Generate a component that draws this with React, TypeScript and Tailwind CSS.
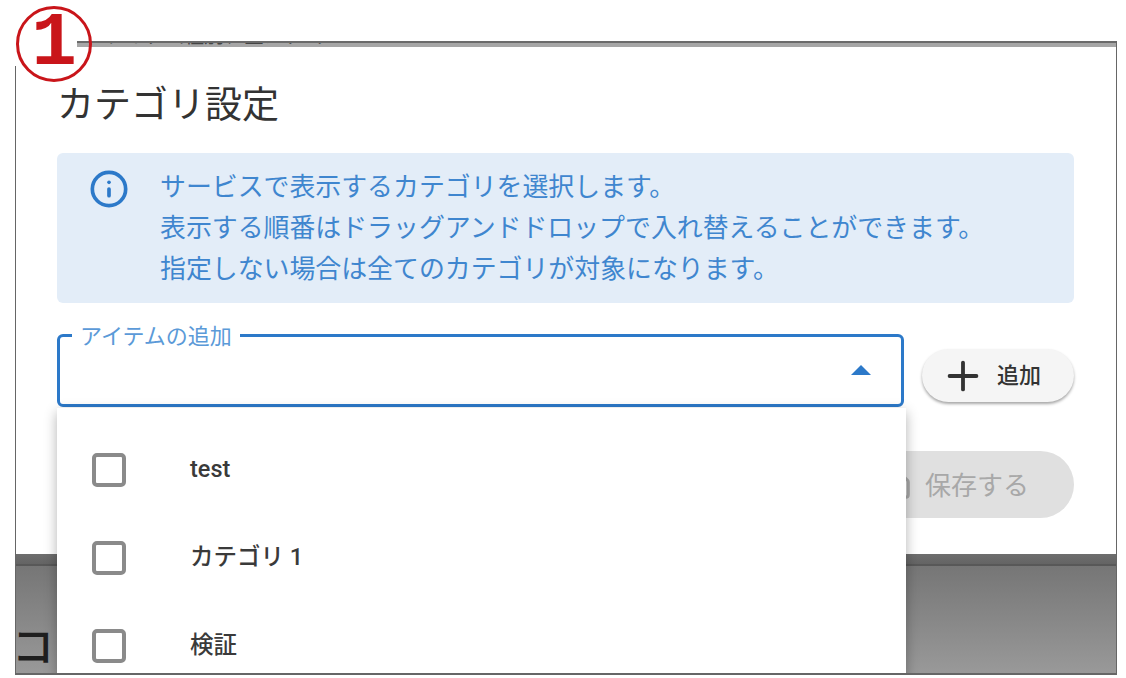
import { Info, Plus, Save } from "lucide-react";

const items = ["test", "カテゴリ 1", "検証"];
const font = "font-['Roboto','Noto_Sans_CJK_JP',sans-serif]";

function Row({ label }: { label: string }) {
  return (
    <div className="flex h-[88px] shrink-0 items-center pl-[35px]">
      <div className="h-[34px] w-[34px] rounded-[5px] border-[4px] border-[#8a8a8a]" />
      <span className="ml-[64px] text-[23.5px] font-medium text-[#3a3a3a]">{label}</span>
    </div>
  );
}

export default function App() {
  return (
    <div className={`relative h-[678px] w-[1126px] overflow-hidden bg-white ${font}`}>
      {/* screenshot frame */}
      <div className="ml-[15px] flex h-[675px] w-[1102px] flex-col pt-[41px]">
        <div className="relative flex h-[634px] flex-col overflow-hidden border-x border-b-2 border-[#666666]">
          {/* sliver of the page above the dialog */}
          <div className="h-[6px] shrink-0 overflow-hidden border-t-2 border-[#6a6a6a] bg-[#a6a6a6] pl-[90px] text-[20px] leading-[6px] whitespace-nowrap text-[#444444]">
            <span className="relative -top-[10px]">アイテム種別、全カテゴリ</span>
          </div>
          <div className="h-[507px] shrink-0 bg-white pl-[41px] pr-[42px]">
            <h1 className="pt-[35px] text-[37px] leading-[48px] font-normal text-[#333333]">カテゴリ設定</h1>
            <div className="mt-[23px] flex h-[150px] gap-[31px] rounded-[6px] bg-[#e3edf8] pl-[32px] pt-[14px] text-[25.9px] leading-[41px] whitespace-nowrap text-[#3f86cf]">
              <Info className="mt-[2px] h-[40px] w-[40px] shrink-0 text-[#2c79c9]" strokeWidth={2.2} />
              <p>
                サービスで表示するカテゴリを選択します。<br />
                表示する順番はドラッグアンドドロップで入れ替えることができます。<br />
                指定しない場合は全てのカテゴリが対象になります。
              </p>
            </div>
            <div className="mt-[31px] flex items-center gap-[18px]">
              <div className="relative flex h-[73px] w-[847px] items-center justify-end rounded-[6px] border-[3px] border-[#2c79c9] pb-[2px] pr-[30px]">
                <span className="absolute -top-[12px] left-[12px] bg-white px-[8px] text-[22px] leading-[24px] text-[#5b9ad8]">アイテムの追加</span>
                <span className="h-0 w-0 border-x-[10px] border-b-[10px] border-x-transparent border-b-[#2c79c9]" />
              </div>
              <button className="mt-[10px] flex h-[53px] w-[152px] items-center gap-[11px] rounded-full bg-[#f5f5f5] pl-[18px] text-[22px] font-medium text-[#333333] shadow-[0_2px_3px_rgba(0,0,0,0.35)]">
                <Plus className="h-[46px] w-[46px] shrink-0" strokeWidth={2} />
                追加
              </button>
            </div>
            <div className="mt-[44px] flex justify-end">
              <button className="flex h-[67px] w-[240px] items-center justify-end gap-[13px] rounded-full bg-[#e0e0e0] pr-[45px] pt-[3px] text-[26px] text-[#a8a8a8]">
                <Save className="h-[30px] w-[30px]" strokeWidth={2.5} />
                保存する
              </button>
            </div>
          </div>
          {/* dimmed page behind the dialog */}
          <div className="h-[10px] shrink-0 bg-gradient-to-b from-[#6e6e6e] to-[#646464]" />
          <div className="flex flex-1 items-end overflow-hidden border-t-2 border-[#585858] bg-gradient-to-b from-[#767676] to-[#999999] pb-[2px]">
            <span className="-ml-[4px] text-[42px] leading-[46px] font-medium text-[#1f1f1f]">コン</span>
          </div>
          {/* open dropdown */}
          <div className="absolute left-[41px] top-[367px] flex h-[270px] w-[849px] flex-col overflow-hidden bg-white pt-[18px] shadow-[0_4px_12px_rgba(0,0,0,0.3)]">
            {items.map((item) => (
              <Row key={item} label={item} />
            ))}
          </div>
        </div>
      </div>
      {/* step badge */}
      <div className="absolute left-0 top-0 h-[66px] w-[77px] bg-white" />
      <div className="absolute left-[16px] top-[6px] flex h-[76px] w-[76px] items-center justify-center rounded-full border-[3px] border-[#c9151a] font-['Liberation_Mono',monospace] text-[76px] leading-none font-bold text-[#c9151a]">
        1
      </div>
    </div>
  );
}
